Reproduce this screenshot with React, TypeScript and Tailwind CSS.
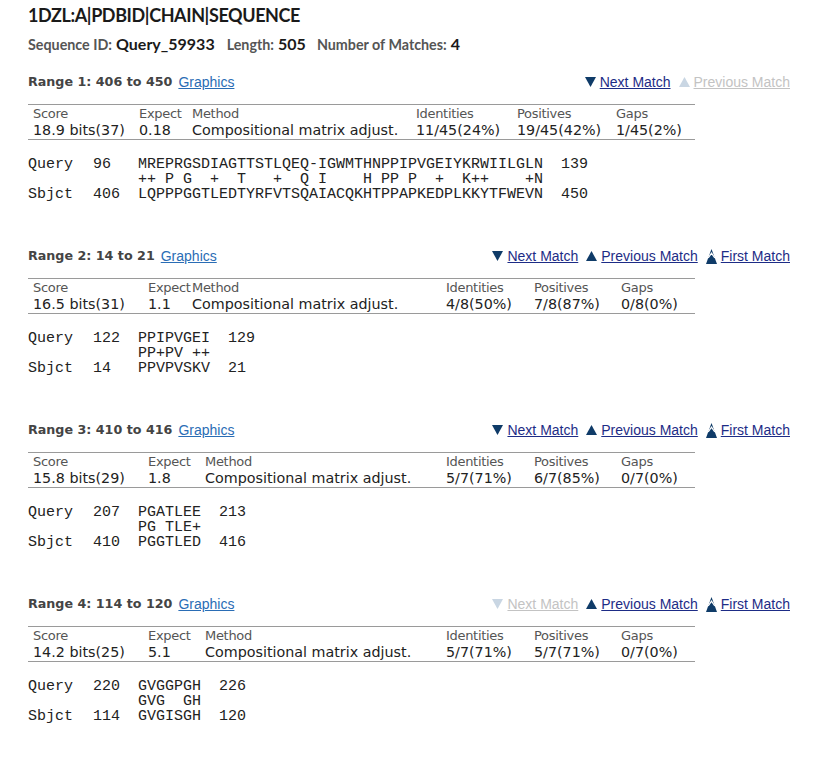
import React from 'react';

type Range = {
  n: number;
  from: number;
  to: number;
  cols: string;
  score: string;
  expect: string;
  ident: string;
  pos: string;
  gaps: string;
  q: [string, string, string];
  mid: string;
  s: [string, string, string];
  next: boolean;
  prev: boolean;
  first: boolean;
};

const ranges: Range[] = [
  {
    n: 1, from: 406, to: 450,
    cols: 'grid-cols-[106px_53px_224px_101px_99px_84px]',
    score: '18.9 bits(37)', expect: '0.18', ident: '11/45(24%)', pos: '19/45(42%)', gaps: '1/45(2%)',
    q: ['96', 'MREPRGSDIAGTTSTLQEQ-IGWMTHNPPIPVGEIYKRWIILGLN', '139'],
    mid: '++ P G  +  T   +  Q I    H PP P  +  K++    +N',
    s: ['406', 'LQPPPGGTLEDTYRFVTSQAIACQKHTPPAPKEDPLKKYTFWEVN', '450'],
    next: true, prev: false, first: false,
  },
  {
    n: 2, from: 14, to: 21,
    cols: 'grid-cols-[115px_44px_254px_88px_87px_79px]',
    score: '16.5 bits(31)', expect: '1.1', ident: '4/8(50%)', pos: '7/8(87%)', gaps: '0/8(0%)',
    q: ['122', 'PPIPVGEI', '129'],
    mid: 'PP+PV ++',
    s: ['14', 'PPVPVSKV', '21'],
    next: true, prev: true, first: true,
  },
  {
    n: 3, from: 410, to: 416,
    cols: 'grid-cols-[115px_57px_241px_88px_87px_79px]',
    score: '15.8 bits(29)', expect: '1.8', ident: '5/7(71%)', pos: '6/7(85%)', gaps: '0/7(0%)',
    q: ['207', 'PGATLEE', '213'],
    mid: 'PG TLE+',
    s: ['410', 'PGGTLED', '416'],
    next: true, prev: true, first: true,
  },
  {
    n: 4, from: 114, to: 120,
    cols: 'grid-cols-[115px_57px_241px_88px_87px_79px]',
    score: '14.2 bits(25)', expect: '5.1', ident: '5/7(71%)', pos: '5/7(71%)', gaps: '0/7(0%)',
    q: ['220', 'GVGGPGH', '226'],
    mid: 'GVG  GH',
    s: ['114', 'GVGISGH', '120'],
    next: false, prev: true, first: true,
  },
];

const Down = ({ on }: { on: boolean }) => (
  <svg width="11" height="10" viewBox="0 0 11 10" className={on ? 'fill-[#0f3b68]' : 'fill-[#c9d6e3]'}>
    <polygon points="0,0 11,0 5.5,10" />
  </svg>
);

const Up = ({ on }: { on: boolean }) => (
  <svg width="11" height="10" viewBox="0 0 11 10" className={on ? 'fill-[#0f3b68]' : 'fill-[#c9d6e3]'}>
    <polygon points="5.5,0 11,10 0,10" />
  </svg>
);

const Top = () => (
  <svg width="11" height="15" viewBox="0 0 11 15">
    <polygon points="5.5,0 11,15 0,15" fill="#0f3b68" />
    <polyline points="2.2,9 5.5,4.2 8.8,9" fill="none" stroke="#ffffff" strokeWidth="1.3" />
  </svg>
);

const NavLink = ({ on, icon, label }: { on: boolean; icon: React.ReactNode; label: string }) => (
  <span className="flex items-center gap-[4px]">
    {icon}
    <span className={on ? 'underline text-[#1d2c86]' : 'underline text-[#c3c3c3]'}>{label}</span>
  </span>
);

const RangeBlock = ({ r }: { r: Range }) => (
  <section className="mb-[44px]">
    <div className="flex items-center justify-between h-[20px]">
      <div className="flex items-center gap-[6px]">
        <span className="font-['DejaVu_Sans',Verdana,sans-serif] font-bold text-[12.7px] text-[#444]">
          Range {r.n}: {r.from} to {r.to}
        </span>
        <span className="font-['Liberation_Sans',Arial,sans-serif] text-[14px] underline text-[#2a6db5]">Graphics</span>
      </div>
      <div className="flex items-center gap-[8px] font-['Liberation_Sans',Arial,sans-serif] text-[14px]">
        <NavLink on={r.next} icon={<Down on={r.next} />} label="Next Match" />
        <NavLink on={r.prev} icon={<Up on={r.prev} />} label="Previous Match" />
        {r.first && <NavLink on icon={<Top />} label="First Match" />}
      </div>
    </div>

    {/* score table */}
    <div
      className={`mt-[12px] w-[667px] grid ${r.cols} border-t border-b border-[#9a9a9a] font-['DejaVu_Sans',Verdana,sans-serif] leading-[17px]`}
    >
      {['Score', 'Expect', 'Method', 'Identities', 'Positives', 'Gaps'].map((h) => (
        <div key={h} className="pl-[5px] text-[#555] text-[13px] tracking-[-0.3px] whitespace-nowrap">{h}</div>
      ))}
      {[r.score, r.expect, 'Compositional matrix adjust.', r.ident, r.pos, r.gaps].map((v, i) => (
        <div key={i} className="pl-[5px] text-[#222] text-[14.3px] whitespace-nowrap">{v}</div>
      ))}
    </div>

    {/* alignment */}
    <div className="mt-[17px] font-['Liberation_Mono','Courier_New',monospace] text-[15px] leading-[15px] text-[#222]">
      <div className="flex whitespace-pre">
        <span className="w-[65px]">Query</span>
        <span className="w-[45px]">{r.q[0]}</span>
        <span>{r.q[1]}  {r.q[2]}</span>
      </div>
      <div className="flex whitespace-pre">
        <span className="w-[65px]"> </span>
        <span className="w-[45px]"> </span>
        <span>{r.mid}</span>
      </div>
      <div className="flex whitespace-pre">
        <span className="w-[65px]">Sbjct</span>
        <span className="w-[45px]">{r.s[0]}</span>
        <span>{r.s[1]}  {r.s[2]}</span>
      </div>
    </div>
  </section>
);

const App: React.FC = () => {
  return (
    <div className="min-h-screen bg-white pl-[28px] pr-[28px] pt-[3px]">
      {/* Header */}
      <h1 className="font-['Lato','Open_Sans',sans-serif] font-bold text-[18px] tracking-[-0.4px] leading-[24px] text-[#1a1a1a]">
        1DZL:A|PDBID|CHAIN|SEQUENCE
      </h1>
      <div className="mt-[5px] h-[20px] flex items-baseline font-['Lato','Open_Sans',sans-serif] font-bold">
        <span className="text-[14.3px] text-[#555]">Sequence ID:</span>
        <span className="ml-[4px] text-[16px] text-[#1a1a1a]">Query_59933</span>
        <span className="ml-[12px] text-[14.3px] text-[#555]">Length:</span>
        <span className="ml-[4px] text-[16px] text-[#1a1a1a]">505</span>
        <span className="ml-[11px] text-[14.3px] text-[#555]">Number of Matches:</span>
        <span className="ml-[4px] text-[16px] text-[#1a1a1a]">4</span>
      </div>

      <div className="mt-[20px] w-[762px]">
        {ranges.map((r) => (
          <RangeBlock key={r.n} r={r} />
        ))}
      </div>
    </div>
  );
};

export default App;
